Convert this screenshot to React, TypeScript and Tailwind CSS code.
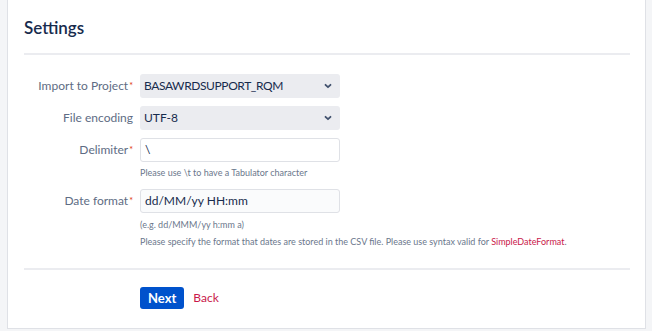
import React from 'react';

const Chevron = () => (
  <svg width="10" height="10" viewBox="0 0 10 10" className="shrink-0">
    <path d="M2.5 3.8 L5 6.2 L7.5 3.8" fill="none" stroke="#42526e" strokeWidth="1.8" strokeLinecap="round" strokeLinejoin="round" />
  </svg>
);

const Req = () => <span className="text-[#de350b] text-[9px] align-top ml-[1px]">*</span>;

const Label = ({ children, req }: { children: React.ReactNode; req?: boolean }) => (
  <div className="w-[109px] shrink-0 text-right text-[12px] text-[#5e6c84] leading-[24px]">
    {children}
    {req && <Req />}
  </div>
);

const App = () => {
  return (
    <div className="h-[331px] w-[652px] bg-[#f4f5f7] pl-[7px] pr-[6px] font-['Lato','Open_Sans',sans-serif]">
      <div className="h-[329px] bg-white border-x border-b border-[#dfe1e6] pl-[16px] pr-[15px]">
        <div className="h-[55px] pt-[16px] border-b-2 border-[#ebecf0]">
          <h2 className="text-[17px] font-semibold text-[#172b4d] leading-[24px]">Settings</h2>
        </div>

        <div className="pt-[19px] flex flex-col">
          <div className="flex gap-[7px]">
            <Label req>Import to Project</Label>
            <div className="w-[200px] h-[24px] bg-[#ebecf0] rounded-[3px] flex items-center justify-between pl-[4px] pr-[7px] text-[12px] text-[#172b4d]">
              <span className="tracking-[-0.4px]">BASAWRDSUPPORT_RQM</span>
              <Chevron />
            </div>
          </div>

          <div className="flex gap-[7px] mt-[8px]">
            <Label>File encoding</Label>
            <div className="w-[200px] h-[24px] bg-[#ebecf0] rounded-[3px] flex items-center justify-between pl-[4px] pr-[7px] text-[12px] text-[#172b4d]">
              <span>UTF-8</span>
              <Chevron />
            </div>
          </div>

          <div className="flex gap-[7px] mt-[8px]">
            <Label req>Delimiter</Label>
            <div className="flex flex-col">
              <div className="w-[200px] h-[24px] bg-white border border-[#dfe1e6] rounded-[3px] flex items-center pl-[4px] text-[12px] text-[#172b4d]">
                \
              </div>
              <div className="text-[9px] text-[#6b778c] leading-[14px] mt-[4px]">
                Please use \t to have a Tabulator character
              </div>
            </div>
          </div>

          <div className="flex gap-[7px] mt-[9px]">
            <Label req>Date format</Label>
            <div className="flex flex-col">
              <div className="w-[200px] h-[24px] bg-[#fafbfc] border border-[#dfe1e6] rounded-[3px] flex items-center pl-[4px] text-[12px] text-[#172b4d]">
                dd/MM/yy HH:mm
              </div>
              <div className="text-[9px] text-[#6b778c] leading-[14px] mt-[5px]">(e.g. dd/MMM/yy h:mm a)</div>
              <div className="text-[9px] text-[#6b778c] leading-[14px] mt-[3px] whitespace-nowrap">
                Please specify the format that dates are stored in the CSV file. Please use syntax valid for{' '}
                <span className="text-[#c9184a]">SimpleDateFormat</span>.
              </div>
            </div>
          </div>
        </div>

        <div className="mt-[19px] border-t-2 border-[#ebecf0] pt-[17px] flex items-center gap-[9px] pl-[116px]">
          <button className="h-[22px] px-[8px] rounded-[3px] bg-[#0052cc] text-white text-[13px] font-bold leading-[22px]">
            Next
          </button>
          <a className="text-[12px] text-[#c9184a]">Back</a>
        </div>
      </div>
    </div>
  );
};

export default App;
